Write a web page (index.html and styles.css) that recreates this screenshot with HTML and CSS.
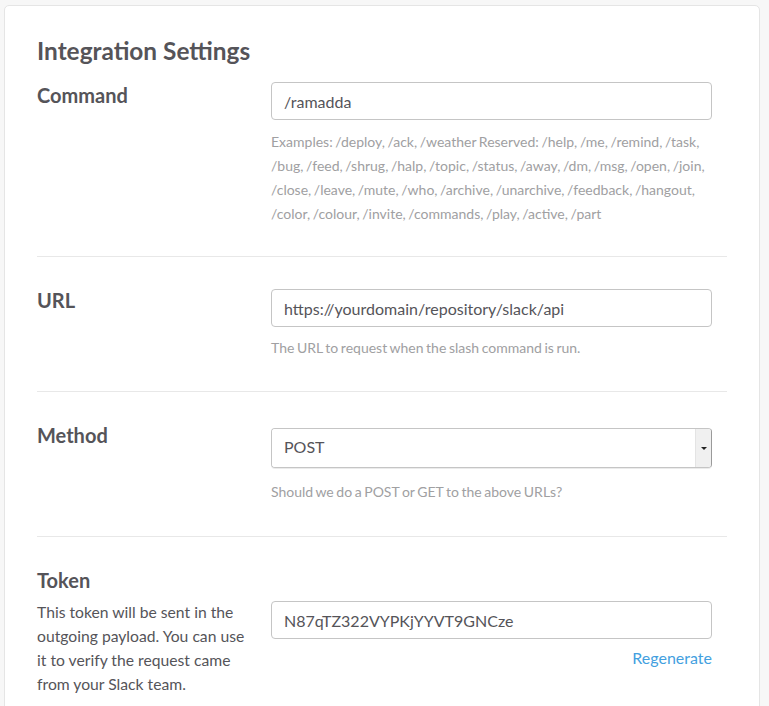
FILE: index.html
```html
<!DOCTYPE html>
<html lang="en">
<head>
<meta charset="utf-8">
<title>Integration Settings</title>
<link rel="stylesheet" href="styles.css">
</head>
<body>
<main class="card">
  <h2 class="title">Integration Settings</h2>

  <section class="row row-first">
    <h3 class="label">Command</h3>
    <div class="field">
      <input class="input" type="text" value="/ramadda">
      <p class="help help-first">Examples: /deploy, /ack, /weather Reserved: /help, /me, /remind, /task, /bug, /feed, /shrug, /halp, /topic, /status, /away, /dm, /msg, /open, /join, /close, /leave, /mute, /who, /archive, /unarchive, /feedback, /hangout, /color, /colour, /invite, /commands, /play, /active, /part</p>
    </div>
  </section>

  <section class="row">
    <h3 class="label">URL</h3>
    <div class="field">
      <input class="input" type="text" value="https://yourdomain/repository/slack/api">
      <p class="help">The URL to request when the slash command is run.</p>
    </div>
  </section>

  <section class="row row-method">
    <h3 class="label">Method</h3>
    <div class="field">
      <div class="select-wrap">
        <select class="select">
          <option>POST</option>
          <option>GET</option>
        </select>
        <span class="select-arrow"><span class="caret"></span></span>
      </div>
      <p class="help help-select">Should we do a POST or GET to the above URLs?</p>
    </div>
  </section>

  <section class="row row-token">
    <h3 class="label label-full">Token</h3>
    <p class="desc">This token will be sent in the outgoing payload. You can use it to verify the request came from your Slack team.</p>
    <div class="field field-token">
      <input class="input" type="text" value="N87qTZ322VYPKjYYVT9GNCze">
      <a class="link" href="#">Regenerate</a>
    </div>
  </section>
</main>
</body>
</html>
```

FILE: styles.css
```css
html, body {
  margin: 0;
  padding: 0;
}

body {
  background: #f7f7f7;
  font-family: Lato, "Open Sans", "Liberation Sans", sans-serif;
  color: #555459;
  padding: 5px 0 0 4px;
}

.card {
  width: 690px;
  background: #ffffff;
  border: 1px solid #e5e5e5;
  border-radius: 5px;
  padding: 30px 32px 40px;
  box-sizing: content-box;
}

.title {
  margin: 0;
  font-size: 24.4px;
  line-height: 30px;
  font-weight: 700;
  color: #555459;
}

.row {
  display: grid;
  grid-template-columns: 234px 441px;
  align-items: start;
  padding: 29px 0 31px;
  border-bottom: 1px solid #e8e8e8;
}

.row-first {
  padding-top: 15px;
  padding-bottom: 30px;
}

.row-method {
  padding-bottom: 32px;
}

.row-token {
  border-bottom: 0;
}

.label {
  margin: 0;
  font-size: 20px;
  line-height: 28px;
  font-weight: 700;
  color: #555459;
}

.label-full {
  grid-column: 1 / -1;
}

.field {
  display: flex;
  flex-direction: column;
  padding-top: 3px;
}

.row-first .field {
  padding-top: 1px;
}

.input {
  box-sizing: border-box;
  height: 38px;
  width: 100%;
  margin: 0;
  padding: 0 12px;
  border: 1px solid #c5c5c5;
  border-radius: 4px;
  background: #fff;
  font-family: Lato, "Open Sans", "Liberation Sans", sans-serif;
  font-size: 16px;
  color: #555459;
  outline: none;
}

.help {
  margin: 9px 0 0;
  font-size: 14px;
  line-height: 24px;
  word-spacing: -1px;
  color: #a0a0a2;
}

.help-first {
  margin-top: 10px;
}

.help-select {
  margin-top: 12px;
}

.select-wrap {
  box-sizing: border-box;
  display: flex;
  height: 40px;
  margin-top: 4px;
  border: 1px solid #c5c5c5;
  border-right-color: #9a9a9a;
  border-radius: 4px;
  overflow: hidden;
  box-shadow: 0 1px 0 rgba(0, 0, 0, 0.08);
}

.select {
  flex: 1;
  appearance: none;
  -webkit-appearance: none;
  border: 0;
  margin: 0;
  padding: 0 12px 3px;
  background: #fff;
  font-family: Lato, "Open Sans", "Liberation Sans", sans-serif;
  font-size: 16px;
  color: #555459;
  outline: none;
}

.select-arrow {
  width: 15px;
  background: #f0f0f0;
  border-left: 1px solid #e4e4e4;
  display: flex;
  align-items: center;
  justify-content: center;
}

.caret {
  width: 0;
  height: 0;
  border-left: 3px solid transparent;
  border-right: 3px solid transparent;
  border-top: 3px solid #222;
}

.desc {
  margin: 6px 0 0;
  padding-right: 20px;
  font-size: 15.7px;
  line-height: 24px;
  color: #555459;
}

.field-token {
  padding-top: 7px;
  align-items: flex-end;
}

.link {
  margin-top: 7px;
  font-size: 16px;
  line-height: 24px;
  color: #439fe0;
  text-decoration: none;
}
```
